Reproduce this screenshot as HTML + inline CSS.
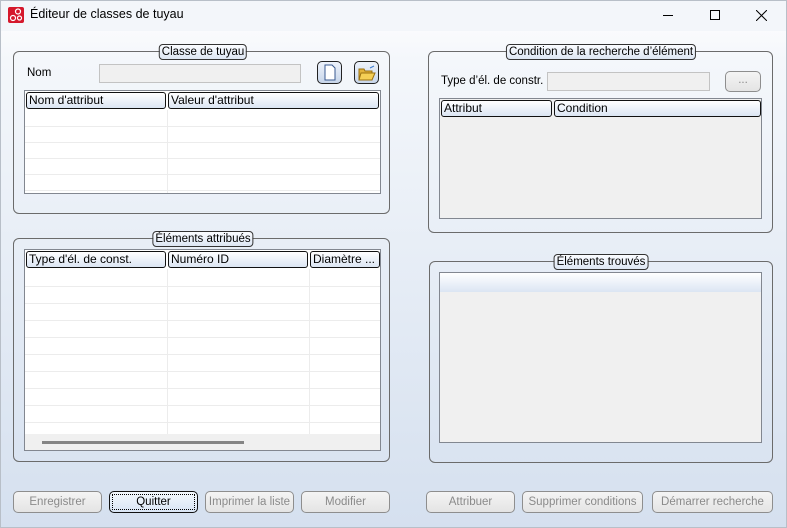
<!DOCTYPE html><html><head><meta charset="utf-8"><style>
*{box-sizing:border-box;margin:0;padding:0}
body{width:787px;height:528px;overflow:hidden;font-family:"Liberation Sans",sans-serif;font-size:11.5px;color:#000;background:linear-gradient(#fafbfd 30px,#f4f7fb 60px,#d5e0ef 528px);position:relative}
.a{position:absolute}
.grp{position:absolute;border:1px solid #6b6b6b;border-radius:6px}
.lg{position:absolute;top:-8px;transform:translateX(-50%);background:linear-gradient(#fafcff,#dde6f3);border:1px solid #333;border-radius:4px;padding:0 2px;line-height:14px;font-size:11.5px;white-space:nowrap}
.tbl{position:absolute;border:1px solid #828790;background:#fff;overflow:hidden}
.hd{position:absolute;top:1px;height:17px;border:1px solid #111;border-radius:3px;background:linear-gradient(#fff,#dbe5f3);padding-left:2px;line-height:15px;font-size:12px;white-space:nowrap;overflow:hidden}
.row{position:absolute;left:0;right:0;height:1px;background:#ececec}
.vl{position:absolute;width:1px;background:#ececec}
.inp{position:absolute;background:#f0f0f0;border:1px solid #c3c3c3}
.btn{position:absolute;height:22px;border:1px solid #8e8e8e;border-radius:5px;background:linear-gradient(#f4f4f4,#e4e4e4);color:#8a8a8a;text-align:center;line-height:20px;font-size:11.5px;white-space:nowrap;overflow:hidden}
</style></head><body>
<div class="a" style="left:0;top:0;width:787px;height:31px;background:#f3f6fa"></div>
<div class="a" style="left:0;top:0;width:787px;height:528px;border:1px solid #b8bfc8;z-index:5;pointer-events:none"></div>
<svg class="a" style="left:8px;top:7px" width="16" height="16"><rect width="16" height="16" rx="2" fill="#d5182b"/><circle cx="10" cy="4.5" r="2.5" fill="none" stroke="#fff" stroke-width="1.2"/><circle cx="5" cy="11" r="2.5" fill="none" stroke="#fff" stroke-width="1.2"/><circle cx="11.5" cy="11" r="2" fill="none" stroke="#fff" stroke-width="1.2"/></svg>
<div class="a" style="left:30px;top:7px;font-size:12.5px">Éditeur de classes de tuyau</div>
<div class="a" style="left:663px;top:15px;width:10px;height:1px;background:#000"></div>
<div class="a" style="left:710px;top:10px;width:10px;height:10px;border:1px solid #000"></div>
<svg class="a" style="left:756px;top:10px" width="11" height="11"><path d="M0 0L11 11M11 0L0 11" stroke="#000"/></svg>

<div class="grp" style="left:13px;top:51px;width:377px;height:163px"><div class="lg" style="left:189px">Classe de tuyau</div></div>
<div class="a" style="left:27px;top:67px">Nom</div>
<div class="inp" style="left:99px;top:64px;width:202px;height:19px"></div>
<div class="a" style="left:317px;top:61px;width:25px;height:23px;border:1px solid #222;border-radius:5px;background:linear-gradient(#eef3fb,#c8d6ea)"><svg width="23" height="21"><path d="M7 3h7l3 3v12H7z" fill="#fff" stroke="#3a5a90"/></svg></div>
<div class="a" style="left:354px;top:61px;width:25px;height:23px;border:1px solid #222;border-radius:5px;background:linear-gradient(#eef3fb,#c8d6ea)"><svg width="23" height="21"><path d="M4 7h5l1 2h7v9H4z" fill="#e2b23a" stroke="#9a7010"/><path d="M6 11h14l-3 7H4z" fill="#f5cf55" stroke="#9a7010"/><path d="M15 6l4-2" stroke="#3a7ad0"/></svg></div>
<div class="tbl" style="left:24px;top:90px;width:357px;height:104px">
<div class="hd" style="left:1px;width:140px">Nom d'attribut</div><div class="hd" style="left:143px;width:211px">Valeur d'attribut</div>
<div class="vl" style="left:142px;top:19px;height:85px"></div>
<div class="row" style="top:35px"></div><div class="row" style="top:51px"></div><div class="row" style="top:67px"></div><div class="row" style="top:83px"></div><div class="row" style="top:99px"></div>
</div>

<div class="grp" style="left:13px;top:238px;width:377px;height:224px"><div class="lg" style="left:189px">Éléments attribués</div></div>
<div class="tbl" style="left:24px;top:249px;width:357px;height:202px">
<div class="hd" style="left:1px;width:140px">Type d'él. de const.</div><div class="hd" style="left:143px;width:140px">Numéro ID</div><div class="hd" style="left:285px;width:70px">Diamètre ...</div>
<div class="vl" style="left:142px;top:19px;height:165px"></div><div class="vl" style="left:284px;top:19px;height:165px"></div>
<div class="row" style="top:36px"></div><div class="row" style="top:53px"></div><div class="row" style="top:70px"></div><div class="row" style="top:87px"></div><div class="row" style="top:104px"></div><div class="row" style="top:121px"></div><div class="row" style="top:138px"></div><div class="row" style="top:155px"></div><div class="row" style="top:172px"></div>
<div class="a" style="left:0;right:0;top:184px;height:18px;background:#f0f0f0"><div class="a" style="left:17px;top:7px;width:202px;height:3px;background:#858585"></div></div>
</div>

<div class="btn" style="left:13px;top:491px;width:89px">Enregistrer</div>
<div class="btn" style="left:109px;top:491px;width:89px;color:#000;border-color:#111;background:linear-gradient(#f4f8fd,#d9e5f4)"><div style="position:absolute;inset:2px;border:1px dotted #000;line-height:14px">Quitter</div></div>
<div class="btn" style="left:205px;top:491px;width:89px">Imprimer la liste</div>
<div class="btn" style="left:301px;top:491px;width:89px">Modifier</div>
<div class="btn" style="left:426px;top:491px;width:89px">Attribuer</div>
<div class="btn" style="left:522px;top:491px;width:121px">Supprimer conditions</div>
<div class="btn" style="left:652px;top:491px;width:121px">Démarrer recherche</div>

<div class="grp" style="left:428px;top:51px;width:345px;height:182px"><div class="lg" style="left:172px">Condition de la recherche d’élément</div></div>
<div class="a" style="left:441px;top:75px">Type d’él. de constr.</div>
<div class="inp" style="left:547px;top:72px;width:163px;height:19px"></div>
<div class="btn" style="left:725px;top:71px;width:36px;height:21px;line-height:17px">...</div>
<div class="tbl" style="left:439px;top:98px;width:323px;height:121px;background:#f0f0f0">
<div class="hd" style="left:1px;width:111px">Attribut</div><div class="hd" style="left:114px;width:207px">Condition</div></div>

<div class="grp" style="left:429px;top:261px;width:344px;height:202px"><div class="lg" style="left:171px">Éléments trouvés</div></div>
<div class="tbl" style="left:439px;top:272px;width:323px;height:171px;background:#f0f0f0">
<div class="a" style="left:0;right:0;top:0;height:19px;background:linear-gradient(#fff,#dbe5f3)"></div></div>
</body></html>
